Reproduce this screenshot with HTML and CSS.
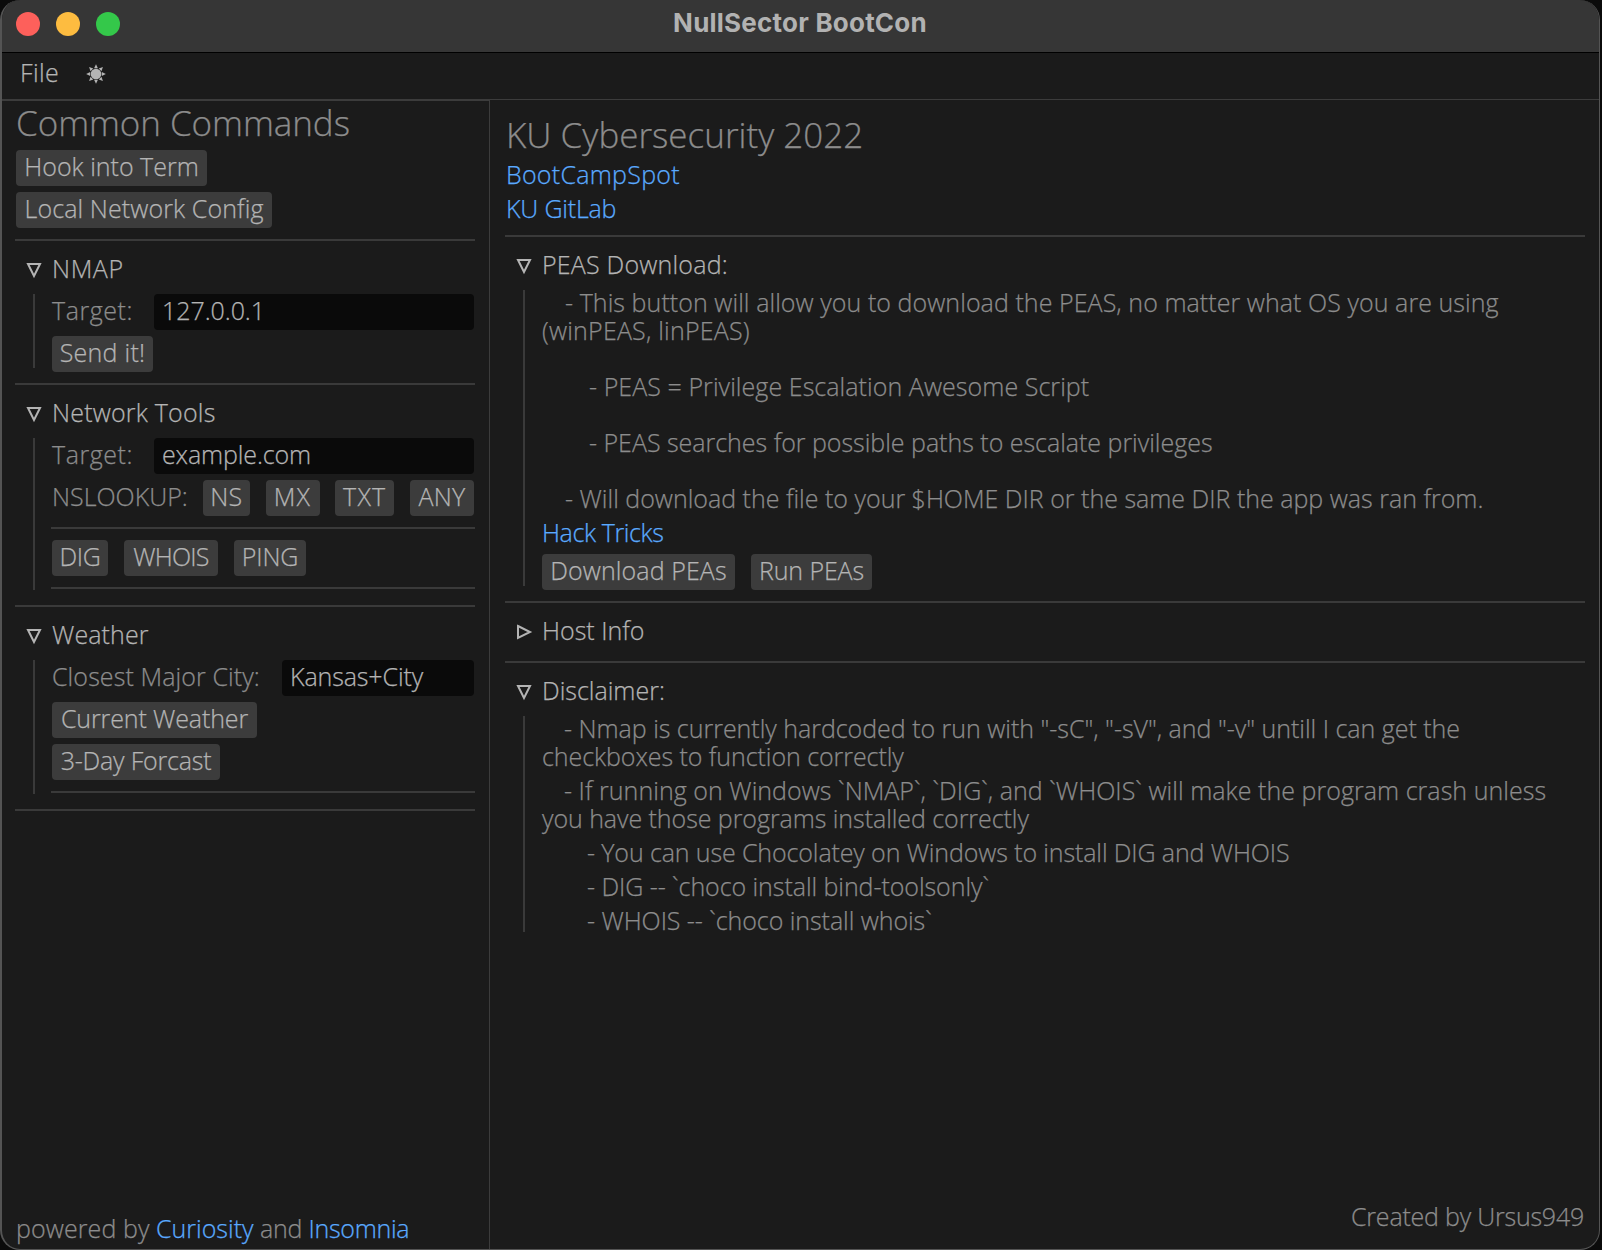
FILE: index.html
```html
<!DOCTYPE html>
<html lang="en">
<head>
<meta charset="utf-8">
<title>NullSector BootCon</title>
<link rel="stylesheet" href="styles.css">
</head>
<body>
<div class="window">
  <header class="titlebar">
    <div class="lights"><i class="light red"></i><i class="light yellow"></i><i class="light green"></i></div>
    <h1 class="title">NullSector BootCon</h1>
  </header>
  <nav class="menubar">
    <span class="menu-item">File</span>
    <svg class="sun" width="20" height="20" viewBox="-10 -10 20 20">
      <circle r="5.3"/>
      <path d="M-1.9-5.8H1.9L0-9.8z"/>
      <path d="M-1.9-5.8H1.9L0-9.8z" transform="rotate(45)"/>
      <path d="M-1.9-5.8H1.9L0-9.8z" transform="rotate(90)"/>
      <path d="M-1.9-5.8H1.9L0-9.8z" transform="rotate(135)"/>
      <path d="M-1.9-5.8H1.9L0-9.8z" transform="rotate(180)"/>
      <path d="M-1.9-5.8H1.9L0-9.8z" transform="rotate(225)"/>
      <path d="M-1.9-5.8H1.9L0-9.8z" transform="rotate(270)"/>
      <path d="M-1.9-5.8H1.9L0-9.8z" transform="rotate(315)"/>
    </svg>
  </nav>
  <div class="panels">
    <aside class="side">
      <h2 class="heading lsm06">Common Commands</h2>
      <button class="btn w191">Hook into Term</button>
      <button class="btn w256 ls1">Local Network Config</button>
      <hr>
      <section>
        <div class="section-head"><svg class="tri" width="16" height="16" viewBox="0 0 16 16"><path d="M2 2H14L8 14z"/></svg><span class="ls6">NMAP</span></div>
        <div class="indent">
          <div class="row"><label class="label-target ls5">Target:</label><div class="input lsm06">127.0.0.1</div></div>
          <button class="btn w101 ls3">Send it!</button>
        </div>
      </section>
      <hr>
      <section>
        <div class="section-head"><svg class="tri" width="16" height="16" viewBox="0 0 16 16"><path d="M2 2H14L8 14z"/></svg><span class="ls2">Network Tools</span></div>
        <div class="indent">
          <div class="row"><label class="label-target ls5">Target:</label><div class="input lsm1">example.com</div></div>
          <div class="row spread"><label class="label-lookup">NSLOOKUP:</label><button class="btn w47 ls2">NS</button><button class="btn w54 ls12">MX</button><button class="btn w59 ls12">TXT</button><button class="btn w64 ls3">ANY</button></div>
          <hr>
          <div class="row gap16"><button class="btn w56 lsm3">DIG</button><button class="btn w94 lsm5">WHOIS</button><button class="btn w72 lsm1">PING</button></div>
          <hr>
        </div>
      </section>
      <hr>
      <section>
        <div class="section-head"><svg class="tri" width="16" height="16" viewBox="0 0 16 16"><path d="M2 2H14L8 14z"/></svg><span class="ls1">Weather</span></div>
        <div class="indent">
          <div class="row"><label class="label-city ls1">Closest Major City:</label><div class="input lsm1">Kansas+City</div></div>
          <button class="btn w205 lsm1">Current Weather</button>
          <button class="btn w168 lsm2">3-Day Forcast</button>
          <hr>
        </div>
      </section>
      <hr>
      <footer class="powered"><span class="ls1">powered by</span> <a>Curiosity</a> <span class="lsm3">and</span> <a class="lsm3">Insomnia</a></footer>
    </aside>
    <main class="main">
      <h2 class="heading">KU Cybersecurity 2022</h2>
      <a class="line ls3">BootCampSpot</a>
      <a class="line lsm2">KU GitLab</a>
      <hr>
      <section>
        <div class="section-head"><svg class="tri" width="16" height="16" viewBox="0 0 16 16"><path d="M2 2H14L8 14z"/></svg><span class="ls2">PEAS Download:</span></div>
        <div class="indent">
          <div class="text">
            <p class="in1 ls06">- This button will allow you to download the PEAS, no matter what OS you are using</p>
            <p class="ls2">(winPEAS, linPEAS)</p>
            <p class="in2 gap-line ls06">- PEAS = Privilege Escalation Awesome Script</p>
            <p class="in2 gap-line lsm01">- PEAS searches for possible paths to escalate privileges</p>
            <p class="in1 gap-line">- Will download the file to your $HOME DIR or the same DIR the app was ran from.</p>
          </div>
          <a class="line lsm4">Hack Tricks</a>
          <div class="row gap16"><button class="btn w193 ls1">Download PEAs</button><button class="btn w121 lsm1">Run PEAs</button></div>
        </div>
      </section>
      <hr>
      <section>
        <div class="section-head"><svg class="tri" width="16" height="16" viewBox="0 0 16 16"><path d="M2 2L14 8L2 14z"/></svg><span>Host Info</span></div>
      </section>
      <hr>
      <section>
        <div class="section-head"><svg class="tri" width="16" height="16" viewBox="0 0 16 16"><path d="M2 2H14L8 14z"/></svg><span>Disclaimer:</span></div>
        <div class="indent note">
          <div class="text">
            <p class="in1 lsm01">- Nmap is currently hardcoded to run with "-sC", "-sV", and "-v" untill I can get the</p>
            <p class="lsm06">checkboxes to function correctly</p>
          </div>
          <div class="text">
            <p class="in1 ls04">- If running on Windows `NMAP`, `DIG`, and `WHOIS` will make the program crash unless</p>
            <p class="lsm06">you have those programs installed correctly</p>
          </div>
          <p class="in2 lsm1">- You can use Chocolatey on Windows to install DIG and WHOIS</p>
          <p class="in2 lsm06">- DIG -- `choco install bind-toolsonly`</p>
          <p class="in2 lsm06">- WHOIS -- `choco install whois`</p>
        </div>
      </section>
      <footer class="credit">Created by Ursus949</footer>
    </main>
  </div>
</div>
</body>
</html>
```
FILE: styles.css
```css
* { box-sizing: border-box; margin: 0; padding: 0; }
body {
  width: 1602px; height: 1250px; overflow: hidden;
  background: #0b0b0b;
  font: 300 25px/28px "Open Sans", sans-serif;
  -webkit-text-stroke: .25px currentColor;
  color: #8c8c8c;
}
.window {
  width: 1600px; height: 1250px;
  display: flex; flex-direction: column;
  background: #1b1b1b;
  border: solid #545454; border-width: 0 1px 1px 2px;
  border-radius: 20px;
  overflow: hidden;
}

/* Title bar */
.titlebar {
  height: 53px; flex: none;
  display: grid; grid-template-columns: 240px 1fr 240px; align-items: center;
  background: #363636; border-bottom: 1px solid #000;
}
.lights { display: flex; gap: 16px; padding: 0 0 4px 14px; }
.light { width: 24px; height: 24px; border-radius: 50%; }
.red { background: #fd605b; }
.yellow { background: #fdbc40; }
.green { background: #34c84a; }
.title {
  padding: 0 1px 6px 0; text-align: center;
  font: 700 26px/32px Inter, sans-serif; letter-spacing: .22px; color: #b2b2b2;
  -webkit-text-stroke: 0;
}
.menubar {
  height: 47px; flex: none;
  display: flex; align-items: center; gap: 27px;
  padding: 0 0 8px 18px;
  border-bottom: 1px solid #3c3c3c;
  color: #b4b4b4;
}
.menu-item { letter-spacing: .4px; }
.sun { fill: #b4b4b4; margin-top: 4px; }

/* Panels */
.panels { flex: 1; display: flex; min-height: 0; }
.side, .main { display: flex; flex-direction: column; align-items: flex-start; gap: 6px; }
.side { width: 488px; padding: 3px 15px 0 14px; border-right: 1px solid #3c3c3c; border-top: 1px solid #3c3c3c; }
.main { flex: 1; padding: 16px 14px 0 16px; }
.side > *, .main > * { flex: none; }
section { width: 100%; display: flex; flex-direction: column; gap: 6px; }
hr {
  align-self: stretch; height: 2px; margin: 5px -1px 5px -1px;
  border: 0; background: #3a3a3a;
}
.main hr { margin-right: 0; }
.heading { height: 40px; font: 300 35px/38px "Open Sans", sans-serif; }
.section-head {
  height: 36px; display: flex; align-items: center; gap: 10px;
  padding-left: 10px; color: #b4b4b4;
}
.section-head span { margin-top: -4px; }
.tri { fill: none; stroke: #b4b4b4; stroke-width: 2; overflow: visible; }
.indent {
  display: flex; flex-direction: column; align-items: flex-start; gap: 6px;
  padding-left: 36px;
  background: linear-gradient(#3a3a3a, #3a3a3a) 17px -1px / 2px calc(100% - 3px) no-repeat;
}
.row { align-self: stretch; display: flex; align-items: center; }
.gap16 { gap: 16px; }
.spread { justify-content: space-between; }
.row label { flex: none; margin-top: -4px; white-space: nowrap; }
.label-target { width: 102px; }
.label-city { width: 230px; }
.label-lookup { width: 135px; }
.input {
  flex: 1; height: 36px; padding: 2px 8px 6px;
  border-radius: 4px; background: #0a0a0a; color: #b4b4b4;
}
.btn {
  flex: none; height: 36px; padding: 0 0 4px;
  border: 0; border-radius: 4px; background: #3c3c3c;
  font: inherit; color: #b4b4b4; text-align: center; white-space: nowrap;
}
a { color: #5aaaff; }
.line { display: block; height: 28px; margin: -2px 0 2px; }
.text, .note > p { margin: -2px 0 2px; }
p { white-space: nowrap; }
.in1 { padding-left: 23px; }
.in2 { padding-left: 47px; }
.note .in1 { padding-left: 22px; }
.note .in2 { padding-left: 45px; }
.gap-line { margin-top: 28px; }
.powered { margin-top: auto; margin-bottom: 7px; }
.credit { margin-top: auto; margin-bottom: 19px; margin-right: 1px; align-self: flex-end; letter-spacing: -.22px; }

/* Button widths */
.w47 { width: 47px; } .w54 { width: 54px; } .w56 { width: 56px; } .w59 { width: 59px; }
.w64 { width: 64px; } .w72 { width: 72px; } .w94 { width: 94px; } .w101 { width: 101px; }
.w121 { width: 121px; } .w168 { width: 168px; } .w191 { width: 191px; } .w193 { width: 193px; }
.w205 { width: 205px; } .w256 { width: 256px; }

/* Tracking */
.ls04 { letter-spacing: .04px; } .ls06 { letter-spacing: .06px; }
.ls1 { letter-spacing: .1px; } .ls2 { letter-spacing: .2px; } .ls3 { letter-spacing: .27px; }
.ls5 { letter-spacing: .55px; } .ls6 { letter-spacing: .6px; } .ls12 { letter-spacing: 1.2px; }
.lsm01 { letter-spacing: -.02px; } .lsm06 { letter-spacing: -.06px; }
.lsm1 { letter-spacing: -.12px; } .lsm2 { letter-spacing: -.2px; }
.lsm3 { letter-spacing: -.3px; } .lsm4 { letter-spacing: -.4px; } .lsm5 { letter-spacing: -.8px; }
```
